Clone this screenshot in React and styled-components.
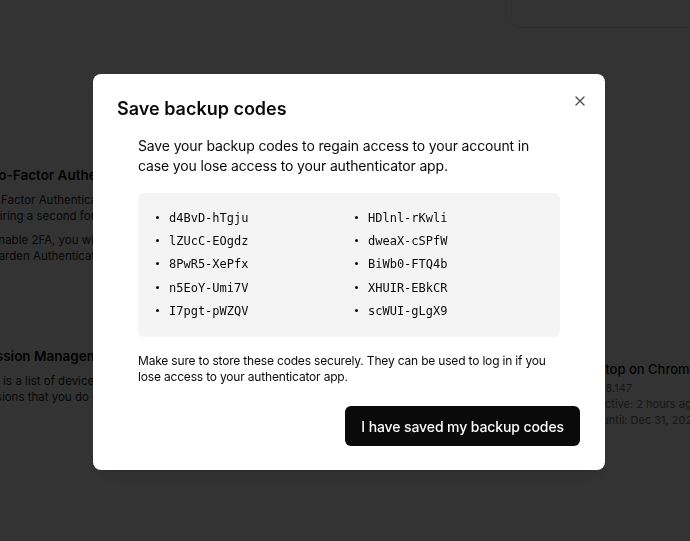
import React from "react";
import styled, { createGlobalStyle } from "styled-components";
import { X, Laptop } from "lucide-react";

const GlobalStyle = createGlobalStyle`
  html, body { margin: 0; padding: 0; }
  body {
    background: #ffffff;
    font-family: Inter, "Noto Sans", sans-serif;
    color: #0a0a0a;
    overflow: hidden;
    width: 690px;
    height: 541px;
  }
  * { box-sizing: border-box; }
`;

/* ---------- background page ---------- */

const Page = styled.div`
  display: grid;
  grid-template-columns: 520px 1fr;
  column-gap: 12px;
  margin-left: -21px;
  width: 732px;
  height: 541px;
  overflow: hidden;
`;

const Main = styled.main`
  display: flex;
  flex-direction: column;
  padding-top: 165px;
`;

const Section = styled.section`
  display: flex;
  flex-direction: column;
  margin-top: ${(p) => p.$offset || 0}px;
`;

const SectionTitle = styled.h2`
  margin: 0;
  font-size: 13.5px;
  line-height: 20px;
  font-weight: 600;
  color: #0a0a0a;
  white-space: nowrap;
`;

const SectionText = styled.p`
  margin: ${(p) => p.$gap || 7}px 0 0 ${(p) => p.$shift || 0}px;
  font-size: 11.5px;
  line-height: 16px;
  color: #262626;
  white-space: nowrap;
`;

const Aside = styled.aside`
  display: flex;
  flex-direction: column;
`;

const TopCard = styled.div`
  margin-top: -40px;
  margin-right: -20px;
  height: 68px;
  border: 1px solid #e5e5e5;
  border-radius: 8px;
`;

const SessionItem = styled.div`
  display: flex;
  gap: 19px;
  margin-top: 331px;
  padding: 0 16px;
`;

const SessionIcon = styled.div`
  width: 28px;
  flex: none;
  color: #737373;
  padding-top: 4px;
`;

const SessionInfo = styled.div`
  display: flex;
  flex-direction: column;
  white-space: nowrap;
`;

const SessionName = styled.div`
  font-size: 13px;
  line-height: 21px;
  font-weight: 500;
  color: #0a0a0a;
`;

const SessionMeta = styled.div`
  font-size: 11px;
  line-height: 16px;
  color: #737373;
`;

/* ---------- dialog ---------- */

const Overlay = styled.div`
  position: fixed;
  inset: 0;
  background: rgba(0, 0, 0, 0.8);
  display: grid;
  place-items: center;
  padding: 3px 0 0 8px;
`;

const Dialog = styled.div`
  position: relative;
  width: 512px;
  background: #ffffff;
  border-radius: 8px;
  padding: 24px;
  display: flex;
  flex-direction: column;
  box-shadow: 0 10px 15px -3px rgba(0, 0, 0, 0.1), 0 4px 6px -4px rgba(0, 0, 0, 0.1);
`;

const Title = styled.h2`
  margin: 0;
  padding-top: 2px;
  font-size: 18px;
  line-height: 18px;
  font-weight: 600;
  color: #0a0a0a;
`;

const CloseButton = styled.button`
  position: absolute;
  top: 19px;
  right: 17px;
  width: 16px;
  height: 16px;
  padding: 0;
  border: 0;
  background: transparent;
  color: #0a0a0a;
  opacity: 0.7;
  display: flex;
  cursor: pointer;
`;

const Body = styled.div`
  display: flex;
  flex-direction: column;
  margin: 18px 21px 0;
`;

const Description = styled.p`
  margin: 0;
  font-size: 14px;
  line-height: 20px;
  letter-spacing: -0.14px;
  color: #0a0a0a;
`;

const CodeBox = styled.ul`
  list-style: none;
  margin: 17px 0 0;
  padding: 16px;
  background: #f4f4f5;
  border-radius: 6px;
  display: grid;
  grid-template-columns: 1fr 1fr;
  column-gap: 8px;
  row-gap: 3.75px;
  grid-auto-flow: column;
  grid-template-rows: repeat(5, auto);
`;

const CodeItem = styled.li`
  display: flex;
  align-items: flex-start;
  font-family: "DejaVu Sans Mono", "Liberation Mono", monospace;
  font-size: 12px;
  line-height: 19.5px;
  color: #0a0a0a;
`;

const Bullet = styled.span`
  flex: none;
  width: 3px;
  height: 3px;
  border-radius: 50%;
  background: #0a0a0a;
  margin: 7px 10px 0 2px;
`;

const Note = styled.p`
  margin: 16px 0 0;
  font-size: 12px;
  line-height: 16px;
  letter-spacing: -0.18px;
  color: #0a0a0a;
`;

const Footer = styled.div`
  display: flex;
  justify-content: flex-end;
  margin-top: 21px;
  padding-right: 1px;
`;

const PrimaryButton = styled.button`
  height: 40px;
  padding: 0 16px;
  border: 0;
  border-radius: 6px;
  background: #0a0a0a;
  color: #fafafa;
  font-family: Inter, "Noto Sans", sans-serif;
  font-size: 14px;
  font-weight: 500;
  letter-spacing: -0.1px;
  cursor: pointer;
`;

const codes = [
  "d4BvD-hTgju",
  "lZUcC-EOgdz",
  "8PwR5-XePfx",
  "n5EoY-Umi7V",
  "I7pgt-pWZQV",
  "HDlnl-rKwli",
  "dweaX-cSPfW",
  "BiWb0-FTQ4b",
  "XHUIR-EBkCR",
  "scWUI-gLgX9",
];

export default function App() {
  return (
    <>
      <GlobalStyle />
      <Page>
        <Main>
          <Section>
            <SectionTitle>Two-Factor Authentication</SectionTitle>
            <SectionText $shift={-4}>
              Two Factor Authentication adds an extra layer of security to your account by
              <br />
              requiring a second form of verification when signing in.
            </SectionText>
            <SectionText $gap={8} $shift={-4}>
              To enable 2FA, you will need an authenticator app such as Google Authenticator,
              <br />
              Bitwarden Authenticator or Authy installed on your phone.
            </SectionText>
          </Section>
          <Section $offset={82}>
            <SectionTitle>Session Management</SectionTitle>
            <SectionText $shift={-2}>
              This is a list of devices that have logged into your account. Revoke any
              <br />
              sessions that you do not recognize.
            </SectionText>
          </Section>
        </Main>
        <Aside>
          <TopCard />
          <SessionItem>
            <SessionIcon>
              <Laptop size={24} strokeWidth={1.5} />
            </SessionIcon>
            <SessionInfo>
              <SessionName>Desktop on Chrome</SessionName>
              <SessionMeta>192.168.147</SessionMeta>
              <SessionMeta>Last active: 2 hours ago</SessionMeta>
              <SessionMeta>Valid until: Dec 31, 2025</SessionMeta>
            </SessionInfo>
          </SessionItem>
        </Aside>
      </Page>

      <Overlay>
        <Dialog role="dialog" aria-modal="true">
          <Title>Save backup codes</Title>
          <CloseButton aria-label="Close">
            <X size={16} strokeWidth={2} />
          </CloseButton>
          <Body>
            <Description>
              Save your backup codes to regain access to your account in case you lose
              access to your authenticator app.
            </Description>
            <CodeBox>
              {codes.map((c) => (
                <CodeItem key={c}>
                  <Bullet />
                  {c}
                </CodeItem>
              ))}
            </CodeBox>
            <Note>
              Make sure to store these codes securely. They can be used to log in if you lose
              access to your authenticator app.
            </Note>
          </Body>
          <Footer>
            <PrimaryButton>I have saved my backup codes</PrimaryButton>
          </Footer>
        </Dialog>
      </Overlay>
    </>
  );
}
